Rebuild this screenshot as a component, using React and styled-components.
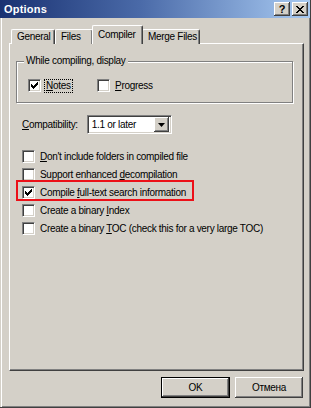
import React from 'react';
import styled, { createGlobalStyle } from 'styled-components';

const GlobalStyle = createGlobalStyle`
  body {
    margin: 0;
    background: #d4d0c8;
    font-family: "Liberation Sans", Arial, sans-serif;
    font-size: 10px;
    letter-spacing: -0.3px;
    color: #000;
  }
`;

const Window = styled.div`
  width: 311px;
  height: 408px;
  box-sizing: border-box;
  display: flex;
  flex-direction: column;
  background: #d4d0c8;
  border-right: 1px solid #404040;
  border-bottom: 1px solid #404040;
  box-shadow: inset 1px 0 0 #d4d0c8, inset 2px 0 0 #fff, inset -1px -1px 0 #808080;
`;

const TitleBar = styled.div`
  height: 18px;
  flex: none;
  display: flex;
  align-items: center;
  padding: 0 2px 0 4px;
  background: linear-gradient(90deg, #1a3272 0%, #4a6aa8 45%, #a8caf2 100%);
`;

const Title = styled.div`
  flex: 1;
  color: #fff;
  font-weight: bold;
  font-size: 11px;
  letter-spacing: 0.2px;
`;

const CaptionButtons = styled.div`
  display: flex;
  gap: 2px;
`;

const CaptionButton = styled.div`
  width: 16px;
  height: 14px;
  box-sizing: border-box;
  background: #d4d0c8;
  display: flex;
  align-items: center;
  justify-content: center;
  font-weight: bold;
  font-size: 11px;
  letter-spacing: 0;
  box-shadow: inset -1px -1px 0 #404040, inset 1px 1px 0 #fff, inset -2px -2px 0 #808080;
`;

const Tabs = styled.div`
  display: flex;
  align-items: flex-end;
  height: 19px;
  margin-top: 7px;
  padding-left: 11px;
  position: relative;
  z-index: 1;
  margin-bottom: -1px;
`;

const Tab = styled.div`
  box-sizing: border-box;
  width: ${p => p.$w}px;
  height: ${p => (p.$active ? 19 : 15)}px;
  margin: 0 ${p => (p.$active ? -1 : 0)}px;
  padding-top: ${p => (p.$active ? 3 : 1)}px;
  padding-left: ${p => (p.$active ? 5 : 5)}px;
  background: #d4d0c8;
  border-top: 1px solid #fff;
  border-left: 1px solid #fff;
  border-right: 1px solid #404040;
  border-radius: 2px 2px 0 0;
  box-shadow: inset -1px 0 0 #808080;
  white-space: nowrap;
  z-index: ${p => (p.$active ? 2 : 1)};
`;

const Panel = styled.div`
  box-sizing: border-box;
  width: 295px;
  height: 328px;
  margin-left: 9px;
  padding: 17px 0 0 6px;
  background: #d4d0c8;
  border-top: 1px solid #fff;
  border-left: 1px solid #fff;
  border-right: 1px solid #404040;
  border-bottom: 1px solid #404040;
  box-shadow: inset -1px -1px 0 #808080;
  display: flex;
  flex-direction: column;
`;

const GroupBox = styled.fieldset`
  box-sizing: border-box;
  width: 277px;
  height: 42px;
  margin: 0;
  padding: 0;
  position: relative;
  border: 1px solid #808080;
  box-shadow: inset 1px 1px 0 #fff, 1px 1px 0 #fff;
`;

const Legend = styled.div`
  position: absolute;
  top: -7px;
  left: 7px;
  padding: 0 2px;
  background: #d4d0c8;
  line-height: 12px;
`;

const GroupRow = styled.div`
  display: flex;
  padding: 17px 0 0 11px;
  gap: 14px;
`;

const CheckRow = styled.label`
  display: flex;
  align-items: center;
  gap: 4px;
  height: 13px;
  position: relative;
  width: ${p => (p.$w ? `${p.$w}px` : 'auto')};
  ${p =>
    p.$marked &&
    `
    &::after {
      content: '';
      position: absolute;
      left: -6px;
      top: -6px;
      width: 178px;
      height: 21px;
      box-sizing: border-box;
      border: 2px solid #ec1018;
    }
  `}
`;

const Box = styled.span`
  width: 13px;
  height: 13px;
  box-sizing: border-box;
  flex: none;
  background: #fff;
  display: flex;
  align-items: center;
  justify-content: center;
  border-top: 1px solid #808080;
  border-left: 1px solid #808080;
  border-right: 1px solid #fff;
  border-bottom: 1px solid #fff;
  box-shadow: inset 1px 1px 0 #404040, inset -1px -1px 0 #d4d0c8;
`;

const Caption = styled.span`
  white-space: nowrap;
  line-height: 12px;
  padding: 0 1px;
  border: 1px dotted ${p => (p.$focus ? '#000' : 'transparent')};
  margin-left: -1px;
`;

const Key = styled.u`
  text-decoration: underline;
`;

const CompatRow = styled.div`
  display: flex;
  align-items: center;
  gap: 9px;
  margin: 12px 0 0 6px;
`;

const Select = styled.div`
  box-sizing: border-box;
  width: 85px;
  height: 19px;
  display: flex;
  align-items: center;
  background: #fff;
  padding: 0 2px 0 4px;
  border-top: 1px solid #808080;
  border-left: 1px solid #808080;
  border-right: 1px solid #fff;
  border-bottom: 1px solid #fff;
  box-shadow: inset 1px 1px 0 #404040, inset -1px -1px 0 #d4d0c8;
`;

const SelectText = styled.span`
  flex: 1;
`;

const DropButton = styled.span`
  width: 15px;
  height: 15px;
  box-sizing: border-box;
  background: #d4d0c8;
  display: flex;
  align-items: center;
  justify-content: center;
  box-shadow: inset -1px -1px 0 #404040, inset 1px 1px 0 #fff, inset -2px -2px 0 #808080;
`;

const OptionList = styled.div`
  display: flex;
  flex-direction: column;
  gap: 5px;
  margin: 16px 0 0 6px;
`;

const Footer = styled.div`
  display: flex;
  justify-content: flex-end;
  gap: 5px;
  padding: 6px 7px 0 0;
`;

const Button = styled.div`
  box-sizing: border-box;
  width: ${p => p.$w}px;
  height: 21px;
  display: flex;
  align-items: center;
  justify-content: center;
  background: #d4d0c8;
  border: ${p => (p.$default ? '1px solid #000' : 'none')};
  box-shadow: inset -1px -1px 0 #404040, inset 1px 1px 0 #fff, inset -2px -2px 0 #808080;
`;

const Check = () => (
  <svg width="7" height="7" viewBox="0 0 7 7">
    <path d="M0 2h1v1h1v1h1V3h1V2h1V1h1V0h1v3H6v1H5v1H4v1H3v1H2V6H1V5H0z" fill="#000" />
  </svg>
);

const Checkbox = ({ checked, children, focus, marked, w }) => (
  <CheckRow $marked={marked} $w={w}>
    <Box>{checked && <Check />}</Box>
    <Caption $focus={focus}>{children}</Caption>
  </CheckRow>
);

export default function App() {
  return (
    <>
      <GlobalStyle />
      <Window>
        <TitleBar>
          <Title>Options</Title>
          <CaptionButtons>
            <CaptionButton>?</CaptionButton>
            <CaptionButton>
              <svg width="8" height="7" viewBox="0 0 8 7">
                <path
                  d="M0 0h2v1h1v1h2V1h1V0h2v1H7v1H6v1H5v1h1v1h1v1h1v1H6V6H5V5H3v1H2v1H0V6h1V5h1V4h1V3H2V2H1V1H0z"
                  fill="#000"
                />
              </svg>
            </CaptionButton>
          </CaptionButtons>
        </TitleBar>

        <Tabs>
          <Tab $w={44}>General</Tab>
          <Tab $w={38}>Files</Tab>
          <Tab $w={51} $active>Compiler</Tab>
          <Tab $w={58}>Merge Files</Tab>
        </Tabs>

        <Panel>
          <GroupBox>
            <Legend>While compiling, display</Legend>
            <GroupRow>
              <Checkbox checked focus w={55}>
                <Key>N</Key>otes
              </Checkbox>
              <Checkbox>
                <Key>P</Key>rogress
              </Checkbox>
            </GroupRow>
          </GroupBox>

          <CompatRow>
            <span>
              <Key>C</Key>ompatibility:
            </span>
            <Select>
              <SelectText>1.1 or later</SelectText>
              <DropButton>
                <svg width="7" height="4" viewBox="0 0 7 4">
                  <path d="M0 0h7L3.5 4z" fill="#000" />
                </svg>
              </DropButton>
            </Select>
          </CompatRow>

          <OptionList>
            <Checkbox>
              <Key>D</Key>on't include folders in compiled file
            </Checkbox>
            <Checkbox>
              Support enhanced <Key>d</Key>ecompilation
            </Checkbox>
            <Checkbox checked marked>
              Compile <Key>f</Key>ull-text search information
            </Checkbox>
            <Checkbox>
              Create a binary <Key>I</Key>ndex
            </Checkbox>
            <Checkbox>
              Create a binary <Key>T</Key>OC (check this for a very large TOC)
            </Checkbox>
          </OptionList>
        </Panel>

        <Footer>
          <Button $w={69} $default>OK</Button>
          <Button $w={68}>Отмена</Button>
        </Footer>
      </Window>
    </>
  );
}
